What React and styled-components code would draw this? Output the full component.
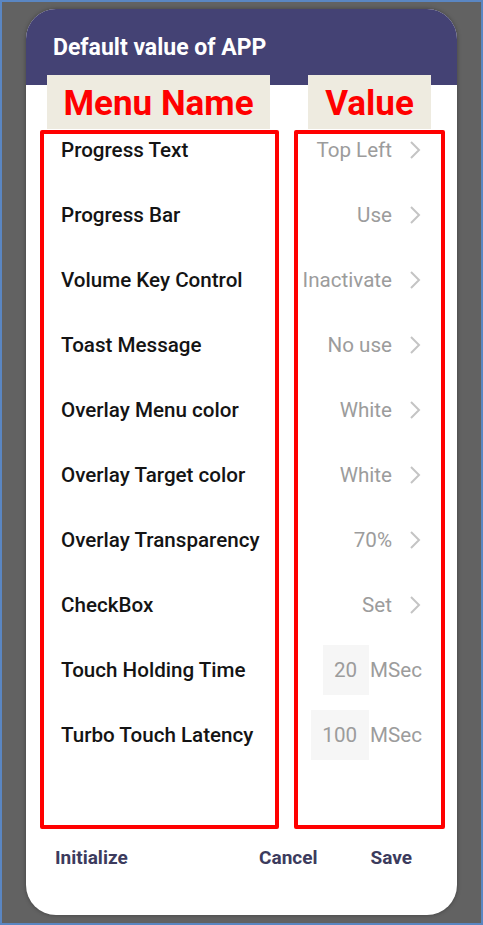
import React from "react";
import styled, { createGlobalStyle } from "styled-components";

const GlobalStyle = createGlobalStyle`
  html, body {
    margin: 0;
    padding: 0;
    background: #626262;
  }
  * {
    box-sizing: border-box;
  }
`;

const Frame = styled.div`
  width: 483px;
  height: 925px;
  border: 2px solid #5a86c2;
  background: #626262;
  padding: 7px 24px 0 24px;
  font-family: Roboto, "Liberation Sans", sans-serif;
`;

const Dialog = styled.div`
  width: 431px;
  height: 906px;
  background: #ffffff;
  border-radius: 30px;
  overflow: hidden;
  box-shadow: 0 0 4px rgba(0, 0, 0, 0.35);
  display: flex;
  flex-direction: column;
`;

const Header = styled.div`
  height: 76px;
  background: #444274;
  padding: 26px 0 0 27px;
  color: #ffffff;
  font-size: 23px;
  font-weight: 700;
  line-height: 26px;
`;

const TagRow = styled.div`
  position: relative;
  z-index: 1;
  margin-top: -10px;
  height: 54px;
  display: flex;
  padding-left: 21px;
`;

const Tag = styled.div`
  width: ${(p) => p.$width}px;
  margin-right: ${(p) => p.$gap || 0}px;
  height: 54px;
  background: #eeebe0;
  color: #ff0000;
  font-size: 35px;
  font-weight: 700;
  display: flex;
  align-items: center;
  justify-content: center;
  padding-top: 2px;
`;

const Columns = styled.div`
  display: flex;
  margin-top: 1px;
  padding-left: 14px;
  gap: 15px;
  height: 699px;
`;

const Column = styled.div`
  width: ${(p) => p.$width}px;
  height: 100%;
  border: 4px solid #ff0000;
  border-radius: 2px;
  display: flex;
  flex-direction: column;
  gap: 33px;
  padding: ${(p) => (p.$right ? "0 19px 0 0" : "0 0 0 17px")};
  align-items: ${(p) => (p.$right ? "flex-end" : "flex-start")};
`;

const Row = styled.div`
  height: 32px;
  flex-shrink: 0;
  display: flex;
  align-items: center;
  white-space: nowrap;
`;

const Name = styled.span`
  font-size: 20.6px;
  font-weight: 500;
  color: #141414;
`;

const Value = styled.span`
  font-size: 20.6px;
  font-weight: 400;
  color: #9c9c9c;
`;

const Chevron = styled.svg`
  width: 14px;
  height: 20px;
  margin-left: 16px;
`;

const NumberBox = styled.div`
  height: 50px;
  background: #f6f6f6;
  padding: 0 12px 0 11px;
  display: flex;
  align-items: center;
  font-size: 20.6px;
  color: #9c9c9c;
  margin-right: 1px;
`;

const Unit = styled.span`
  font-size: 20.6px;
  color: #9c9c9c;
`;

const Buttons = styled.div`
  height: 56px;
  display: flex;
  align-items: center;
  padding: 0 45px 0 29px;
`;

const Button = styled.span`
  font-size: 19px;
  font-weight: 700;
  color: #3c3b5d;
  margin-left: ${(p) => p.$ml || 0}px;
`;

const Spacer = styled.div`
  flex: 1;
`;

const items = [
  { name: "Progress Text", value: "Top Left" },
  { name: "Progress Bar", value: "Use" },
  { name: "Volume Key Control", value: "Inactivate" },
  { name: "Toast Message", value: "No use" },
  { name: "Overlay Menu color", value: "White" },
  { name: "Overlay Target color", value: "White" },
  { name: "Overlay Transparency", value: "70%" },
  { name: "CheckBox", value: "Set" },
  { name: "Touch Holding Time", number: "20" },
  { name: "Turbo Touch Latency", number: "100" },
];

const ChevronIcon = () => (
  <Chevron viewBox="0 0 14 20">
    <path d="M3 2 L11 10 L3 18" fill="none" stroke="#c4c4c4" strokeWidth="2" />
  </Chevron>
);

const App = () => {
  return (
    <>
      <GlobalStyle />
      <Frame>
        <Dialog>
          <Header>Default value of APP</Header>
          <TagRow>
            <Tag $width={223} $gap={38}>
              Menu Name
            </Tag>
            <Tag $width={123}>Value</Tag>
          </TagRow>
          <Columns>
            <Column $width={239}>
              {items.map((it) => (
                <Row key={it.name}>
                  <Name>{it.name}</Name>
                </Row>
              ))}
            </Column>
            <Column $width={151} $right>
              {items.map((it) => (
                <Row key={it.name}>
                  {it.number ? (
                    <>
                      <NumberBox>{it.number}</NumberBox>
                      <Unit>MSec</Unit>
                    </>
                  ) : (
                    <>
                      <Value>{it.value}</Value>
                      <ChevronIcon />
                    </>
                  )}
                </Row>
              ))}
            </Column>
          </Columns>
          <Buttons>
            <Button>Initialize</Button>
            <Spacer />
            <Button>Cancel</Button>
            <Button $ml={53}>Save</Button>
          </Buttons>
        </Dialog>
      </Frame>
    </>
  );
};

export default App;
